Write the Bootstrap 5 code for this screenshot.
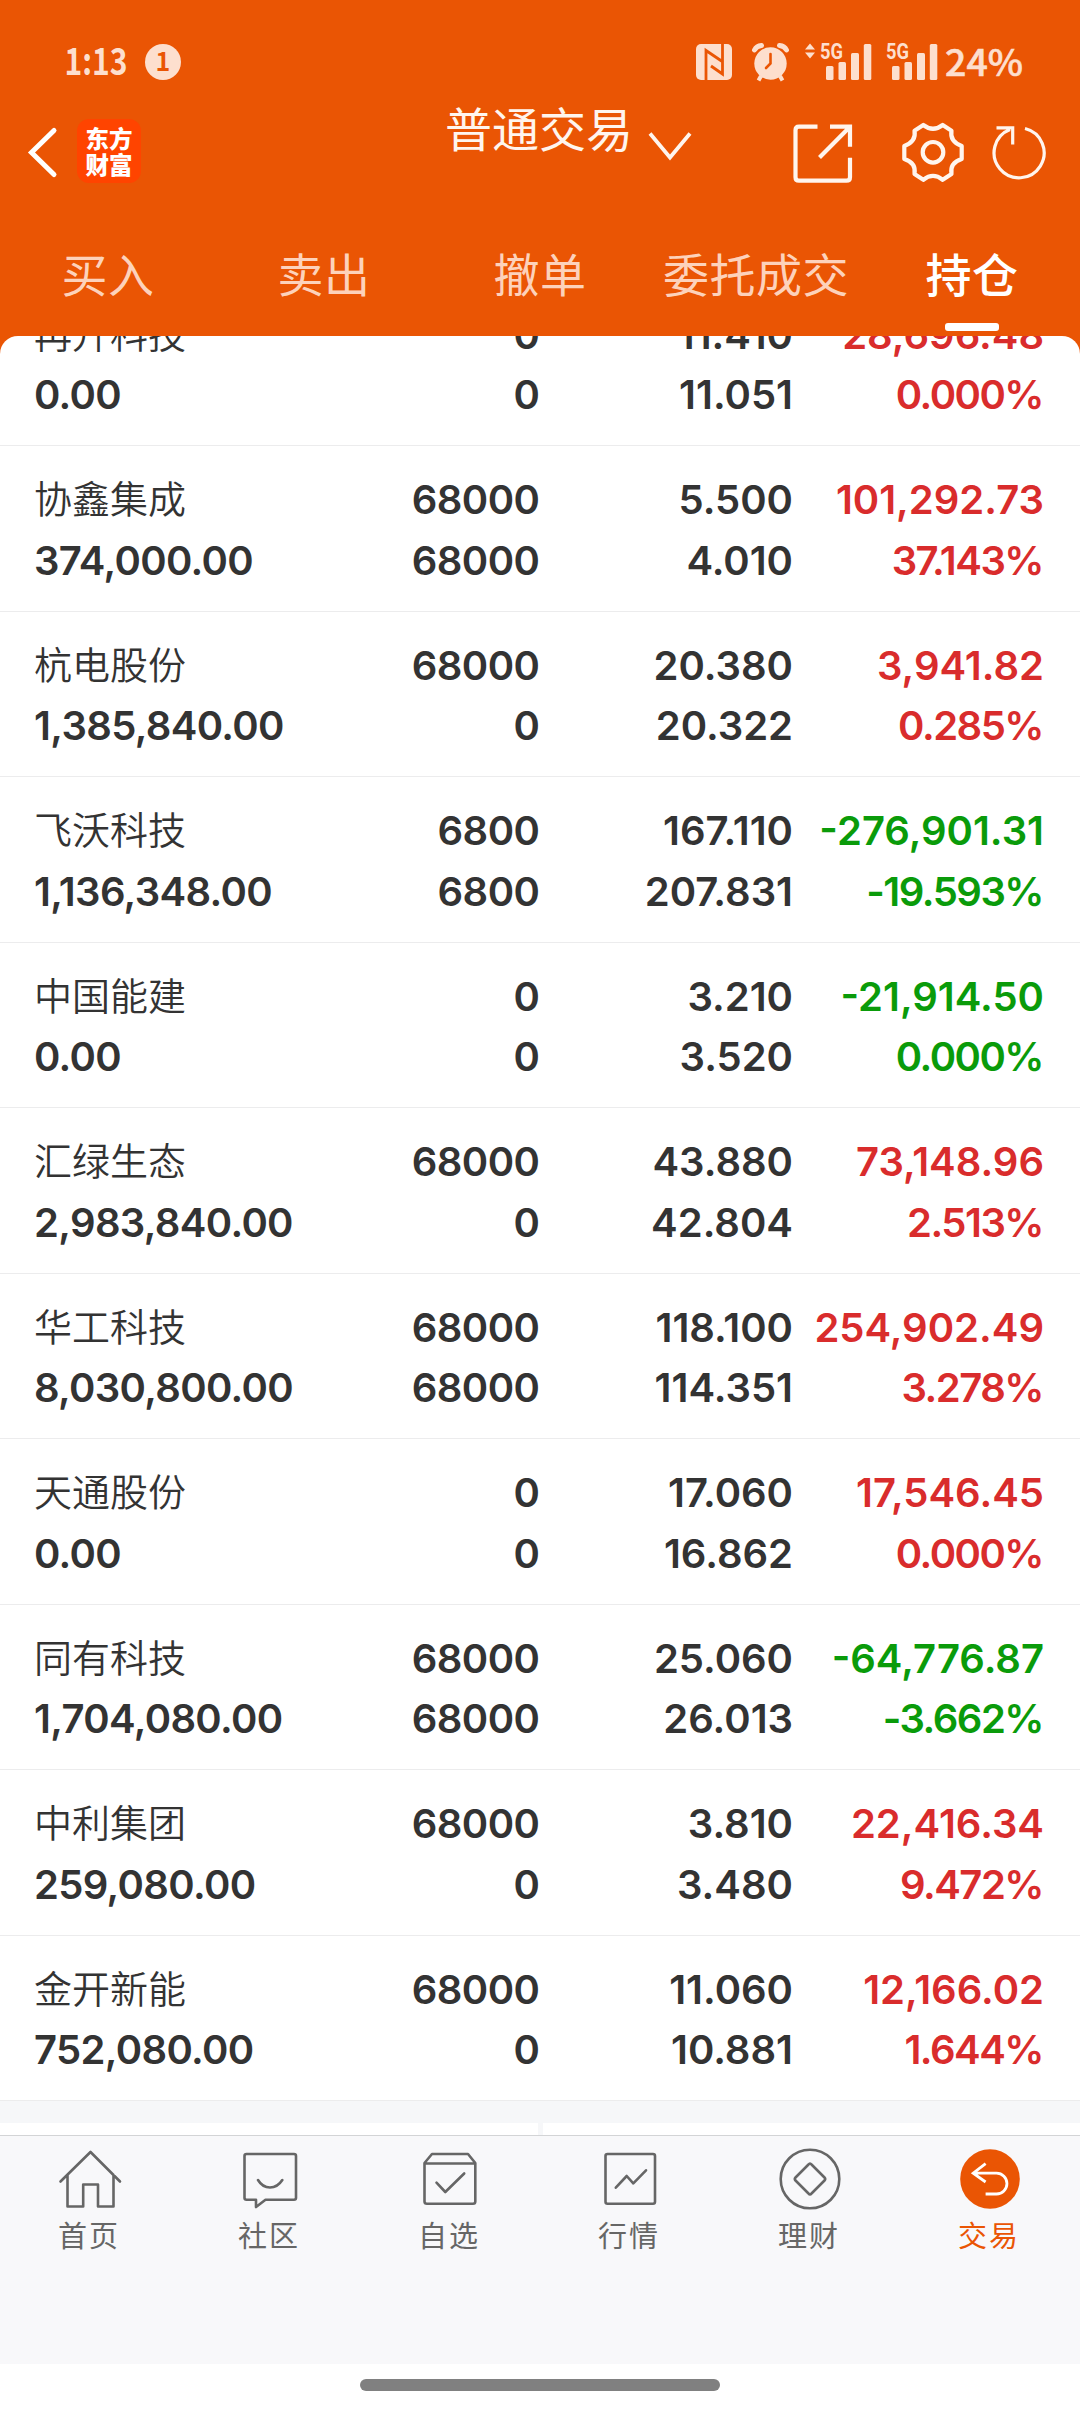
<!DOCTYPE html>
<html lang="zh-CN">
<head>
<meta charset="utf-8">
<meta name="viewport" content="width=device-width, initial-scale=1">
<title>普通交易 - 持仓</title>
<link rel="stylesheet" href="https://cdn.jsdelivr.net/npm/bootstrap@5.3.0/dist/css/bootstrap.min.css">
<style>
  :root { --brand:#ea5504; --tint:#fddfce; --ink:#333; --up:#d92c2c; --down:#0a9b0a; }
  body { font-family:Inter,"Noto Sans CJK SC",sans-serif; color:var(--ink); background:#fff; height:2412px; overflow:hidden; }
  svg { display:block; flex:none; overflow:visible; }
  .top-area { background:var(--brand); height:360px; }
  .status-bar { height:84px; padding:40px 58px 0 65px; }
  .title-bar { height:128px; padding-left:28px; padding-right:33px; color:#fff; }
  .logo-tile { width:64px; height:64px; border-radius:12px; background:#ff4400; margin:35px 0 0 21px; padding-top:7px; }
  .logo-tile div { font:900 23.500px/25.500px "Noto Sans CJK SC",sans-serif; }
  .page-title { font-size:47px; line-height:60px; margin:16px 0 0 304px; color:#fff5ee; }
  .tab-strip { height:123px; }
  .tab-strip .nav-link { width:216px; padding:0; margin-top:31px; height:93px; font-size:46px; line-height:64px; letter-spacing:.500px; color:#fdd2bb; border:0; }
  .tab-strip .nav-link.active { color:#fff; font-weight:500; }
  .tab-mark { width:54px; height:8.500px; border-radius:3px; background:#fff; margin:15.500px auto 0; }
  .sheet { height:1799px; margin-top:-24px; border-radius:18px 18px 0 0; overflow:hidden; background:#fff; }
  .holdings { margin-top:-55.500px; }
  .holding { height:165.500px; border-bottom:1px solid #ececed; padding:23px 36px 0 34px; font-size:40px; line-height:61px; font-weight:600; }
  .holding .line { height:60.500px; }
  .c-name { width:300px; letter-spacing:-.650px; } .c-qty { width:205.500px; letter-spacing:-.500px; } .c-price { width:253.500px; } .c-gain { width:251px; }
  .c-name.stock { font-weight:350; font-size:38px; letter-spacing:0; }
  .c-gain.rate { letter-spacing:-1.500px; width:250px; }
  .up { color:var(--up); } .down { color:var(--down); }
  .gap-band { height:22px; background:#f6f7f9; }
  .peek { height:12.500px; } .peek i { width:5px; background:#f6f7f9; margin-left:538px; }
  .bottom-nav { height:229px; background:#f8f8fa; border-top:1px solid #d3d4d6; padding-top:11px; color:#666; }
  .bottom-nav a { width:180px; color:inherit; font-size:29px; line-height:40px; letter-spacing:2px; font-family:"Noto Sans CJK SC",sans-serif; }
  .bottom-nav a span { margin:3px 2px 0 0; }
  .bottom-nav a.on { color:var(--brand); }
  .ln { fill:none; stroke:currentColor; stroke-width:2.600; stroke-linejoin:round; stroke-linecap:round; }
  .home-pill { width:360px; height:12px; border-radius:6px; background:#808080; margin:15px auto 0; }
</style>
<script src="https://cdn.jsdelivr.net/npm/bootstrap@5.3.0/dist/js/bootstrap.bundle.min.js"></script>
</head>
<body>
<header class="top-area">
  <div class="status-bar">
    <svg width="957" height="44" viewBox="65 40 957 44" fill="#fddfce">
      <text x="64.500" y="75" font-family="Noto Sans CJK SC" font-weight="700" font-size="36.500" textLength="63" lengthAdjust="spacingAndGlyphs">1:13</text>
      <circle cx="163" cy="62" r="18"/>
      <text x="163" y="71" text-anchor="middle" font-family="Noto Sans CJK SC" font-weight="700" font-size="25" fill="#ea5504">1</text>
      <rect x="696" y="44" width="36" height="36" rx="5"/>
      <path d="M706 80V50.500L723 62M722.500 44V74L711 66" fill="none" stroke="#ea5504" stroke-width="2.800"/>
      <circle cx="770.500" cy="63.500" r="16.200"/>
      <path d="M754.500 50q2-4 7-4.500M786.500 50q-2-4-7-4.500" fill="none" stroke="#fddfce" stroke-width="5" stroke-linecap="round"/>
      <path d="M761 76l-2.500 4.500M780 76l2.500 4.500" stroke="#fddfce" stroke-width="4"/>
      <path d="M770.500 54v9.500l-4.500 4.500" fill="none" stroke="#ea5504" stroke-width="2.600" stroke-linecap="round"/>
      <path d="M805 49.500l5-6 5 6zM805 52.500l5 6 5-6z"/>
      <g id="signal">
        <text x="820" y="59" font-family="Roboto" font-weight="700" font-size="21.500" textLength="23" lengthAdjust="spacingAndGlyphs">5G</text>
        <rect x="826" y="66" width="7.500" height="14" rx="1.500"/><rect x="838.500" y="62" width="7.500" height="18" rx="1.500"/>
        <rect x="851" y="53" width="8" height="27" rx="1.500"/><rect x="863.800" y="44" width="7.500" height="36" rx="1.500"/>
      </g>
      <use href="#signal" x="66"/>
      <text x="945" y="75.500" font-family="Noto Sans CJK SC" font-weight="500" font-size="36" textLength="78" lengthAdjust="spacingAndGlyphs" stroke="#fddfce" stroke-width=".6">24%</text>
    </svg>
  </div>
  <div class="title-bar d-flex align-items-start">
    <svg width="28" height="50" viewBox="28 128 28 50" style="margin-top:44px"><path d="M54 130.500L31.500 152.500L54 174.500" fill="none" stroke="#fff" stroke-width="5" stroke-linecap="round"/></svg>
    <div class="logo-tile text-center"><div>东方</div><div>财富</div></div>
    <div class="page-title text-nowrap">普通交易</div>
    <svg class="ms-auto" width="400" height="64" viewBox="647 120 400 64" style="margin-top:36px" fill="none" stroke="#fff5ee" stroke-width="4.200">
      <path stroke-width="3.800" d="M650 133.500l20 24 20-24"/>
      <path d="M817.500 126.700H799q-3.500 0-3.500 3.500V177.200q0 3.500 3.500 3.500H846.500q3.500 0 3.500-3.500V157.700M830 126.700H850V146.700M850 126.700L819.500 157.500"/>
      <path stroke-linejoin="round" d="M923.300 125L914.500 130.700Q916.500 141.500 904.300 146V159Q916.500 163 914.500 174L923.300 179.800Q933 172 942.700 179.800L951.500 174Q949.500 163 961.700 159V146Q949.500 141.500 951.500 130.700L942.700 125Q933 132.500 923.300 125Z"/>
      <circle cx="933" cy="152.300" r="10.300"/>
      <path stroke-width="3.200" d="M1025 128.500A25 25 0 1 1 1010 129.500M996.500 127.800H1012.700V144.500"/>
    </svg>
  </div>
  <nav class="nav tab-strip flex-nowrap text-center">
    <a class="nav-link">买入</a><a class="nav-link">卖出</a><a class="nav-link">撤单</a><a class="nav-link">委托成交</a>
    <a class="nav-link active">持仓<div class="tab-mark"></div></a>
  </nav>
</header>
<main class="sheet position-relative">
  <div class="holdings" id="holdings"></div>
  <div class="gap-band"></div>
  <div class="peek d-flex"><i></i></div>
</main>
<footer>
  <nav class="bottom-nav d-flex text-center">
    <a class="d-flex flex-column align-items-center text-decoration-none"><svg class="ln" width="64" height="64" viewBox="-32 -32 64 64"><path d="M-29.500 2.500L.5-27L30 2.500M-22.500-4V27.500H-6.800V5.500H8V27.500H23.500V-4"/></svg><span>首页</span></a>
    <a class="d-flex flex-column align-items-center text-decoration-none"><svg class="ln" width="64" height="64" viewBox="-32 -32 64 64"><path d="M-23.500-25H24Q26-25 26-23V19Q26 20.700 24 20.700H-4.500L-14 28V20.700H-23.500Q-25.500 20.700-25.500 19V-23Q-25.500-25-23.500-25ZM-12 1Q-7.500 8.500 0 8.500T12.300 1"/></svg><span>社区</span></a>
    <a class="d-flex flex-column align-items-center text-decoration-none"><svg class="ln" width="64" height="64" viewBox="-32 -32 64 64"><path d="M-25.500-16L-18-25H18L25.300-16V22.500Q25.300 24.700 23 24.700H-23Q-25.500 24.700-25.500 22.500ZM-25.500-15.500H25.300M-13.500 3.700L-4.700 13L14.200-5.500"/></svg><span>自选</span></a>
    <a class="d-flex flex-column align-items-center text-decoration-none"><svg class="ln" width="64" height="64" viewBox="-32 -32 64 64"><rect x="-24.500" y="-25" width="49.500" height="49.700" rx="2"/><path d="M-14.200 8.700L-3.300-3L3.300 4.300L16-8.700"/></svg><span>行情</span></a>
    <a class="d-flex flex-column align-items-center text-decoration-none"><svg class="ln" width="64" height="64" viewBox="-32 -32 64 64"><circle r="29.300"/><path d="M-1.500-14.500Q0-16.500 1.500-14.500L14.500-1.500Q16 0 14.500 1.500L1.500 14.500Q0 16.500-1.500 14.500L-14.500 1.500Q-16 0-14.500-1.500Z"/></svg><span>理财</span></a>
    <a class="on d-flex flex-column align-items-center text-decoration-none"><svg width="64" height="64" viewBox="-32 -32 64 64"><circle r="29.800" fill="#ea5504"/><path d="M-4.400-15.300L-16.800-5.900L-4.400 3M-16.800-5.900H6.500A10.400 10.400 0 0 1 6.500 15H-4.400" fill="none" stroke="#fff" stroke-width="2.800"/></svg><span>交易</span></a>
  </nav>
  <div class="home-pill"></div>
</footer>
<script>
  // name, market value, quantity, available, price, cost, profit, profit rate
  const holdings = [
    ["再升科技","0.00","0","0","11.410","11.051","28,696.48","0.000%"],
    ["协鑫集成","374,000.00","68000","68000","5.500","4.010","101,292.73","37.143%"],
    ["杭电股份","1,385,840.00","68000","0","20.380","20.322","3,941.82","0.285%"],
    ["飞沃科技","1,136,348.00","6800","6800","167.110","207.831","-276,901.31","-19.593%"],
    ["中国能建","0.00","0","0","3.210","3.520","-21,914.50","0.000%"],
    ["汇绿生态","2,983,840.00","68000","0","43.880","42.804","73,148.96","2.513%"],
    ["华工科技","8,030,800.00","68000","68000","118.100","114.351","254,902.49","3.278%"],
    ["天通股份","0.00","0","0","17.060","16.862","17,546.45","0.000%"],
    ["同有科技","1,704,080.00","68000","68000","25.060","26.013","-64,776.87","-3.662%"],
    ["中利集团","259,080.00","68000","0","3.810","3.480","22,416.34","9.472%"],
    ["金开新能","752,080.00","68000","0","11.060","10.881","12,166.02","1.644%"]
  ];
  document.getElementById("holdings").innerHTML = holdings.map(([n, v, q, a, p, c, g, r]) => {
    const tone = g.startsWith("-") ? "down" : "up";
    const line = (first, cls, x, y, z, kind) => `<div class="line d-flex text-end text-nowrap"><div class="c-name text-start ${cls}">${first}</div><div class="c-qty">${x}</div><div class="c-price">${y}</div><div class="c-gain ${kind} ${tone}">${z}</div></div>`;
    return `<div class="holding">${line(n, "stock", q, p, g, "")}${line(v, "", a, c, r, "rate")}</div>`;
  }).join("");
</script>
</body>
</html>
